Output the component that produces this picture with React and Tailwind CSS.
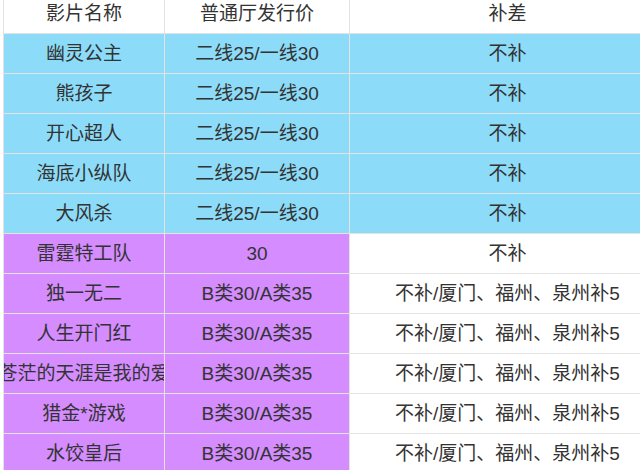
const blueRows = [
  { name: "幽灵公主", price: "二线25/一线30", diff: "不补" },
  { name: "熊孩子", price: "二线25/一线30", diff: "不补" },
  { name: "开心超人", price: "二线25/一线30", diff: "不补" },
  { name: "海底小纵队", price: "二线25/一线30", diff: "不补" },
  { name: "大风杀", price: "二线25/一线30", diff: "不补" },
];

const purpleRows = [
  { name: "雷霆特工队", price: "30", diff: "不补" },
  { name: "独一无二", price: "B类30/A类35", diff: "不补/厦门、福州、泉州补5" },
  { name: "人生开门红", price: "B类30/A类35", diff: "不补/厦门、福州、泉州补5" },
  { name: "苍茫的天涯是我的爱", price: "B类30/A类35", diff: "不补/厦门、福州、泉州补5" },
  { name: "猎金*游戏", price: "B类30/A类35", diff: "不补/厦门、福州、泉州补5" },
  { name: "水饺皇后", price: "B类30/A类35", diff: "不补/厦门、福州、泉州补5" },
];

const Cell = ({ width, bg, children }) => (
  <div
    className={`${width} ${bg} h-[40px] pt-[2px] shrink-0 flex items-center justify-center overflow-hidden whitespace-nowrap border-l border-b border-[#e3e3e3]`}
  >
    {children}
  </div>
);

const Row = ({ row, first, second, third }) => (
  <div className="flex">
    <Cell width="w-[161px]" bg={first}>{row.name}</Cell>
    <Cell width="w-[185px]" bg={second}>{row.price}</Cell>
    <Cell width="w-[316px]" bg={third}>{row.diff}</Cell>
  </div>
);

export default function App() {
  return (
    <div className="w-[640px] h-[470px] overflow-hidden bg-white">
      <div className="ml-[3px] -mt-[6px] w-[662px] text-[19px] text-[#333] font-['Liberation_Sans','Noto_Sans_CJK_SC',sans-serif]">
        {/* header */}
        <Row
          row={{ name: "影片名称", price: "普通厅发行价", diff: "补差" }}
          first="bg-white"
          second="bg-white"
          third="bg-white"
        />

        {blueRows.map((r) => (
          <Row key={r.name} row={r} first="bg-[#8cdcf9]" second="bg-[#8cdcf9]" third="bg-[#8cdcf9]" />
        ))}

        {purpleRows.map((r) => (
          <Row key={r.name} row={r} first="bg-[#d48cff]" second="bg-[#d48cff]" third="bg-white" />
        ))}
      </div>
    </div>
  );
}
